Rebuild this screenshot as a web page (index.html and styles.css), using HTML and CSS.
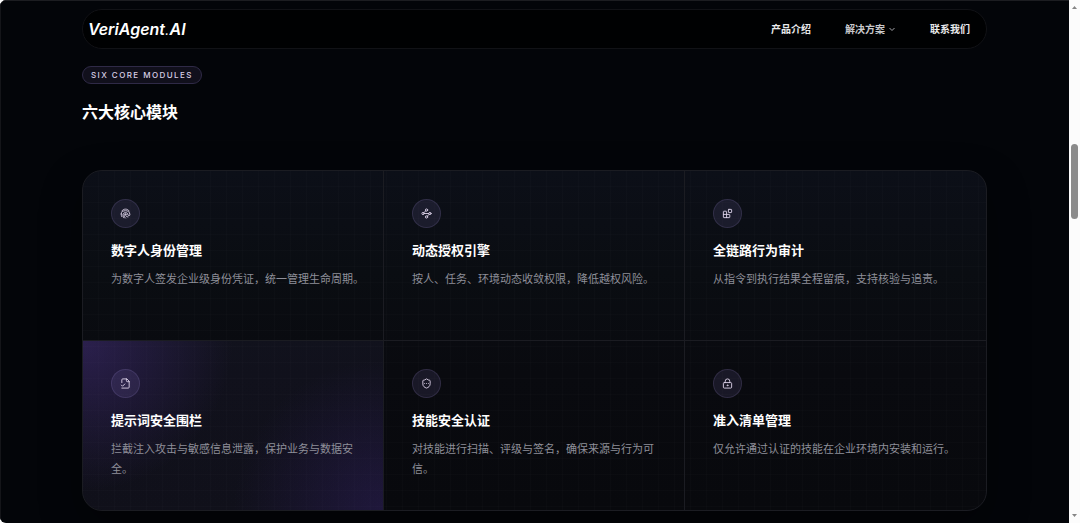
FILE: index.html
```html
<!DOCTYPE html>
<html lang="zh-CN">

<head>
    <meta charset="utf-8">
    <meta name="viewport" content="width=device-width, initial-scale=1.0">
    <title>VeriAgent.AI</title>
    <link rel="stylesheet" href="styles.css">
</head>

<body>
    <div class="window">
        <div class="page">
            <header class="topbar">
                <a class="logo" href="#">VeriAgent<span class="logo-dot">.</span>AI</a>
                <nav class="menu">
                    <a class="menu-item" href="#product">产品介绍</a>
                    <button class="menu-item" type="button">解决方案
                        <svg class="chevron" viewBox="0 0 8 8" aria-hidden="true"><path d="M1.5 3 4 5.500 6.500 3" /></svg>
                    </button>
                    <a class="menu-item" href="#contact">联系我们</a>
                </nav>
            </header>

            <main>
                <p class="tag">SIX CORE MODULES</p>
                <h1>六大核心模块</h1>

                <section class="modules">
                    <article class="module">
                        <span class="icon">
                            <svg viewBox="0 0 24 24" aria-hidden="true">
                                <path d="M4 6.500C6 3.700 8.800 2.500 12 2.500s6 1.200 8 4" />
                                <path d="M2.500 13C2.500 8 6.500 6 12 6s9.500 2.500 9.500 8.500c0 3-3.500 3-4 .5-.5-3-2-5-5.500-5s-6 2.500-5.500 6c.3 2.300 1 4 2 5.500" />
                                <path d="M12 14c0 3.500 2 5.500 5.500 5.500" />
                                <path d="M12 22c-2-2-3-4-3-6.500 0-4 6-4 6-1" />
                                <path d="M4 19c-.8-1.500-1.300-3.500-1.500-6" />
                            </svg>
                        </span>
                        <h2>数字人身份管理</h2>
                        <p>为数字人签发企业级身份凭证，统一管理生命周期。</p>
                    </article>

                    <article class="module">
                        <span class="icon">
                            <svg viewBox="0 0 24 24" aria-hidden="true">
                                <circle cx="12" cy="4.500" r="2.500" />
                                <circle cx="4.500" cy="12" r="2.500" />
                                <circle cx="19.500" cy="12" r="2.500" />
                                <circle cx="12" cy="19.500" r="2.500" />
                                <path d="m10.200 6.300-3.900 3.900M7 12h10M13.800 17.700l3.900-3.900" />
                            </svg>
                        </span>
                        <h2>动态授权引擎</h2>
                        <p>按人、任务、环境动态收敛权限，降低越权风险。</p>
                    </article>

                    <article class="module">
                        <span class="icon">
                            <svg viewBox="0 0 24 24" aria-hidden="true">
                                <rect x="14" y="3" width="7" height="7" rx="1" />
                                <path d="M10 21V8a1 1 0 0 0-1-1H4a1 1 0 0 0-1 1v12a1 1 0 0 0 1 1h12a1 1 0 0 0 1-1v-5a1 1 0 0 0-1-1H3" />
                            </svg>
                        </span>
                        <h2>全链路行为审计</h2>
                        <p>从指令到执行结果全程留痕，支持核验与追责。</p>
                    </article>

                    <article class="module active">
                        <span class="icon">
                            <svg viewBox="0 0 24 24" aria-hidden="true">
                                <path d="M4 10V4a2 2 0 0 1 2-2h9l5 5v13a2 2 0 0 1-2 2H4" />
                                <path d="M14 2v4a2 2 0 0 0 2 2h4" />
                                <path d="m3 15.500 2.500 2.500 5-5" />
                            </svg>
                        </span>
                        <h2>提示词安全围栏</h2>
                        <p>拦截注入攻击与敏感信息泄露，保护业务与数据安全。</p>
                    </article>

                    <article class="module">
                        <span class="icon">
                            <svg viewBox="0 0 24 24" aria-hidden="true">
                                <path d="M20 13c0 5-3.500 7.500-8 9-4.500-1.500-8-4-8-9V6a1 1 0 0 1 1-1c2 0 4.500-1.200 6.200-2.700a1.200 1.200 0 0 1 1.600 0C14.500 3.800 17 5 19 5a1 1 0 0 1 1 1z" />
                                <path d="M8 12h.01M12 12h.01M16 12h.01" />
                            </svg>
                        </span>
                        <h2>技能安全认证</h2>
                        <p>对技能进行扫描、评级与签名，确保来源与行为可信。</p>
                    </article>

                    <article class="module">
                        <span class="icon">
                            <svg viewBox="0 0 24 24" aria-hidden="true">
                                <rect x="3" y="10" width="18" height="12" rx="2" />
                                <path d="M7 10V7a5 5 0 0 1 10 0v3" />
                                <circle cx="12" cy="16" r="1" />
                            </svg>
                        </span>
                        <h2>准入清单管理</h2>
                        <p>仅允许通过认证的技能在企业环境内安装和运行。</p>
                    </article>
                </section>
            </main>
        </div>

        <div class="scrollbar" aria-hidden="true">
            <svg class="arrow" viewBox="0 0 5 3"><path d="M0 3 2.500 0 5 3z" /></svg>
            <div class="track">
                <div class="thumb"></div>
            </div>
            <svg class="arrow" viewBox="0 0 5 3"><path d="M0 0h5L2.500 3z" /></svg>
        </div>
    </div>
</body>

</html>
```
FILE: styles.css
```css
* {
    box-sizing: border-box;
}

body {
    margin: 0;
    background-color: #fcfcfc;
    color: white;
    font-family: "Noto Sans CJK SC", sans-serif;
}

h1,
h2,
p {
    margin: 0;
}

.window {
    display: flex;
    min-height: 100vh;
    border-radius: 6px;
    overflow: hidden;
}

.page {
    flex: 1;
    padding: 8px 24px 12px;
    background-color: #030509;
    border-top: 1px solid #1c1d21;
    box-shadow: inset 1px 0 #141519;
}

.topbar,
main {
    max-width: 905px;
    margin: 0 auto;
}

/* header */

.topbar {
    display: flex;
    align-items: center;
    justify-content: space-between;
    height: 40px;
    padding: 0 16px 0 5px;
    background-color: #000102;
    border: 1px solid #111216;
    border-radius: 20px;
}

.logo {
    color: white;
    font-family: Inter, sans-serif;
    font-size: 16px;
    font-weight: 600;
    font-style: italic;
    line-height: 20px;
    text-decoration: none;
}

.logo-dot {
    font-weight: 300;
}

.menu {
    display: flex;
    gap: 34px;
}

.menu-item {
    display: flex;
    align-items: center;
    gap: 3px;
    padding: 0;
    background: none;
    border: none;
    color: #e9e9eb;
    font-family: inherit;
    font-size: 10px;
    font-weight: bold;
    line-height: 20px;
    text-decoration: none;
}

button.menu-item {
    color: #c9c9cc;
}

.chevron {
    width: 8px;
    height: 8px;
    fill: none;
    stroke: #a5a5aa;
}

/* heading */

.tag {
    width: fit-content;
    margin-top: 17px;
    padding: 0 8px;
    background-color: #11101c;
    border: 1px solid #2f2a47;
    border-radius: 9px;
    color: #d9cfe6;
    font-family: Inter, sans-serif;
    font-size: 8px;
    font-weight: 500;
    letter-spacing: 0.18em;
    line-height: 16px;
}

h1 {
    margin: 15px 0 47px;
    font-size: 16px;
    line-height: 24px;
}

/* modules */

.modules {
    display: grid;
    grid-template-columns: 1fr 1fr 1fr;
    border: 1px solid #1b1c22;
    border-radius: 20px;
    overflow: hidden;
    background-image:
        linear-gradient(90deg, rgba(255, 255, 255, 0.012) 1px, transparent 1px),
        linear-gradient(rgba(255, 255, 255, 0.012) 1px, transparent 1px),
        linear-gradient(#0c0f18, #0a0d12 30%, #090a0f 60%, #08090d);
    background-size: 16px 16px, 16px 16px, 100% 100%;
    background-position: 15px 0, 0 15px, 0 0;
    box-shadow: 0 16px 40px rgba(0, 0, 0, 0.4);
}

.module {
    min-height: 170px;
    padding: 28px 18px 20px 28px;
    border-right: 1px solid #1b1c22;
    border-bottom: 1px solid #1b1c22;
}

.module:nth-child(3n) {
    border-right: none;
}

.module:nth-child(n+4) {
    min-height: 169px;
    border-bottom: none;
}

.active {
    background-image:
        radial-gradient(circle at 0 0, rgba(95, 60, 175, 0.33), transparent 150px),
        radial-gradient(circle at 100% 100%, rgba(75, 45, 155, 0.26), transparent 150px),
        linear-gradient(rgba(120, 110, 200, 0.07), rgba(120, 110, 200, 0.07));
}

.icon {
    display: flex;
    align-items: center;
    justify-content: center;
    width: 29px;
    height: 29px;
    background-color: rgba(150, 130, 215, 0.12);
    border: 1px solid rgba(160, 140, 220, 0.16);
    border-radius: 50%;
}

.icon svg {
    width: 11px;
    height: 11px;
    fill: none;
    stroke: #ddd2e9;
    stroke-width: 2;
    stroke-linecap: round;
    stroke-linejoin: round;
}

h2 {
    margin: 12px 0 8px;
    font-size: 13px;
    line-height: 20px;
}

.module p {
    color: #8e8f99;
    font-size: 11px;
    line-height: 20px;
}

/* scrollbar */

.scrollbar {
    display: flex;
    flex-direction: column;
    align-items: center;
    width: 11px;
    padding: 6px 0;
    background-color: #fcfcfc;
}

.arrow {
    width: 5px;
    height: 3px;
    fill: #858585;
}

.track {
    flex: 1;
    padding-top: 135px;
}

.thumb {
    width: 7px;
    height: 75px;
    background-color: #8b8b8b;
    border-radius: 4px;
}
```
